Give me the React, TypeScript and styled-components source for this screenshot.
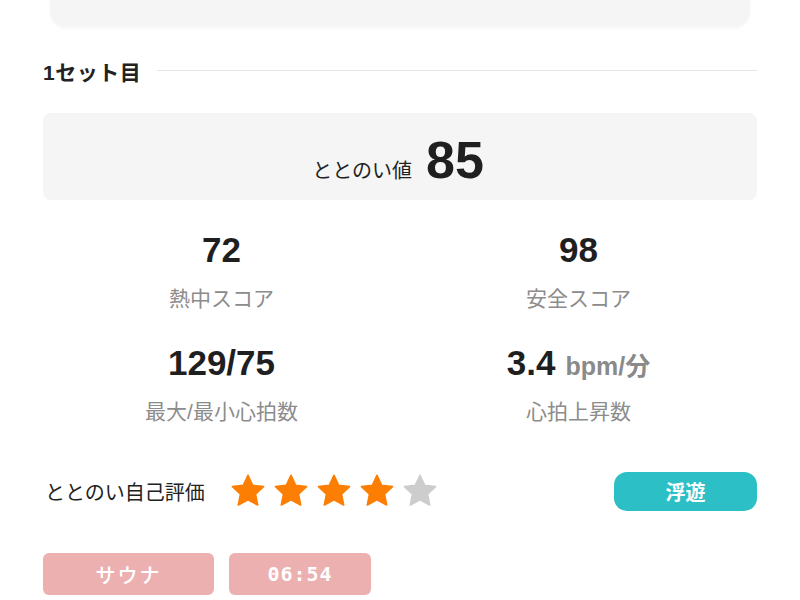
import React from "react";
import styled, { createGlobalStyle } from "styled-components";

const GlobalStyle = createGlobalStyle`
  html, body {
    margin: 0;
    padding: 0;
    background: #ffffff;
    overflow: hidden;
  }
  body {
    font-family: "Liberation Sans", "Noto Sans CJK JP", sans-serif;
    color: #222222;
  }
`;

const Page = styled.div`
  width: 800px;
  height: 600px;
  box-sizing: border-box;
  padding: 0 43px;
  overflow: hidden;
`;

const PrevCard = styled.div`
  height: 80px;
  margin: -53px 7px 0;
  background: #f5f5f5;
  border-radius: 16px;
  box-shadow: 0 2px 3px rgba(0, 0, 0, 0.03);
`;

const SetHeading = styled.div`
  display: flex;
  align-items: center;
  gap: 16px;
  height: 30px;
  margin-top: 29px;

  h2 {
    margin: 0;
    font-size: 21px;
    font-weight: 700;
    letter-spacing: 0.5px;
    white-space: nowrap;
  }
`;

const Rule = styled.div`
  flex: 1;
  height: 1px;
  background: #e4e4e4;
  margin-top: -2px;
`;

const ScoreBox = styled.div`
  display: flex;
  align-items: baseline;
  justify-content: center;
  gap: 14px;
  height: 87px;
  margin-top: 27px;
  background: #f5f5f5;
  border-radius: 8px;
  box-sizing: border-box;
  padding-top: 17px;
  padding-right: 4px;
`;

const ScoreLabel = styled.span`
  font-size: 20px;
  color: #222;
`;

const ScoreValue = styled.span`
  font-size: 52px;
  font-weight: 700;
  color: #1f1f1f;
`;

const StatsGrid = styled.div`
  display: grid;
  grid-template-columns: 1fr 1fr;
  row-gap: 30px;
  margin-top: 30px;
`;

const StatCell = styled.div`
  display: flex;
  flex-direction: column;
  align-items: center;
`;

const StatValue = styled.div`
  height: 40px;
  line-height: 40px;
  font-size: 35px;
  font-weight: 700;
  color: #1f1f1f;
  white-space: nowrap;
`;

const StatUnit = styled.span`
  font-size: 25px;
  color: #8a8a8a;
  margin-left: 10px;
`;

const StatLabel = styled.div`
  margin-top: 15px;
  height: 28px;
  line-height: 28px;
  font-size: 21px;
  color: #8c8c8c;
`;

const RatingRow = styled.div`
  display: flex;
  align-items: center;
  height: 40px;
  margin-top: 45px;
`;

const RatingLabel = styled.span`
  font-size: 20px;
  color: #222;
  margin-left: 2px;
`;

const Stars = styled.div`
  display: flex;
  gap: 3px;
  margin-left: 23px;
`;

const Mood = styled.div`
  margin-left: auto;
  width: 143px;
  height: 39px;
  border-radius: 13px;
  background: #2dbfc6;
  color: #ffffff;
  font-size: 20px;
  font-weight: 700;
  display: flex;
  align-items: center;
  justify-content: center;
`;

const TagRow = styled.div`
  display: flex;
  gap: 15px;
  margin-top: 42px;
`;

const Tag = styled.div<{ $width: number; $mono?: boolean }>`
  width: ${(p) => p.$width}px;
  height: 42px;
  border-radius: 6px;
  background: #ecb0b1;
  color: #ffffff;
  font-size: 20px;
  font-weight: ${(p) => (p.$mono ? 700 : 500)};
  font-family: ${(p) =>
    p.$mono
      ? `"DejaVu Sans Mono", "Liberation Mono", monospace`
      : `"Noto Sans CJK JP", sans-serif`};
  letter-spacing: ${(p) => (p.$mono ? "1px" : "2px")};
  display: flex;
  align-items: center;
  justify-content: center;
`;

const Star: React.FC<{ on: boolean }> = ({ on }) => (
  <svg width="40" height="40" viewBox="0 0 24 24">
    <path
      d="M12 2.6l2.8 6 6.5.8-4.8 4.5 1.3 6.5L12 17.2l-5.8 3.2 1.3-6.5-4.8-4.5 6.5-.8z"
      fill={on ? "#fc7e02" : "#cdcdcd"}
      stroke={on ? "#fc7e02" : "#cdcdcd"}
      strokeWidth="1"
      strokeLinejoin="round"
    />
  </svg>
);

const stats = [
  { value: "72", label: "熱中スコア" },
  { value: "98", label: "安全スコア" },
  { value: "129/75", label: "最大/最小心拍数" },
  { value: "3.4", unit: "bpm/分", label: "心拍上昇数" },
];

const App: React.FC = () => {
  const rating = 4;

  return (
    <>
      <GlobalStyle />
      <Page>
        <PrevCard />
        <SetHeading>
          <h2>1セット目</h2>
          <Rule />
        </SetHeading>
        <ScoreBox>
          <ScoreLabel>ととのい値</ScoreLabel>
          <ScoreValue>85</ScoreValue>
        </ScoreBox>
        <StatsGrid>
          {stats.map((s) => (
            <StatCell key={s.label}>
              <StatValue>
                {s.value}
                {s.unit && <StatUnit>{s.unit}</StatUnit>}
              </StatValue>
              <StatLabel>{s.label}</StatLabel>
            </StatCell>
          ))}
        </StatsGrid>
        <RatingRow>
          <RatingLabel>ととのい自己評価</RatingLabel>
          <Stars>
            {[1, 2, 3, 4, 5].map((n) => (
              <Star key={n} on={n <= rating} />
            ))}
          </Stars>
          <Mood>浮遊</Mood>
        </RatingRow>
        <TagRow>
          <Tag $width={171}>サウナ</Tag>
          <Tag $width={142} $mono>
            06:54
          </Tag>
        </TagRow>
      </Page>
    </>
  );
};

export default App;
